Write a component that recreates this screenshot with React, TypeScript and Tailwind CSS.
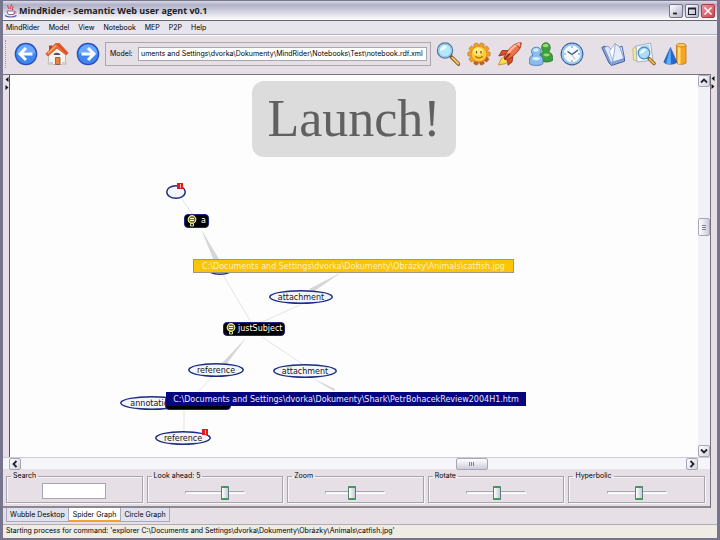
import { useState, type ReactNode } from "react";

const MENUS = ["MindRider", "Model", "View", "Notebook", "MEP", "P2P", "Help"];

function CupIcon() {
  return (
    <svg viewBox="0 0 12 14" className="h-3.5 w-3" aria-hidden="true">
      <path d="M6 0c2.500 1.500-3 3 0 5M8 2c1 1.200-2 2 0 4M3 1c-1 2 1 2.500.5 4" fill="none" stroke="#d8485a" strokeWidth="1.100" />
      <path d="M2 7h7.500l-.8 3.500H3.200z" fill="#fff" stroke="#7a6fae" />
      <path d="M9.500 7.500c2 0 1.700 2-.5 2.200" fill="none" stroke="#d8485a" />
      <path d="M0 11.500c2 2 9 2 11.500 0" fill="none" stroke="#5b57a4" strokeWidth="1.200" />
    </svg>
  );
}

function ArrowIcon({ forward = false }: { forward?: boolean }) {
  return (
    <svg viewBox="0 0 24 24" className="size-6" aria-hidden="true">
      <circle cx="12" cy="12" r="11.300" fill="#2850b8" />
      <circle cx="12" cy="12" r="10" fill="#3f86f4" />
      <path d="M2.500 12a9.500 9.500 0 0 1 19 0c-5-2-13-2-19 0z" fill="#6ca8ff" />
      <path
        d={forward ? "M5.500 12h12M12 6l6 6-6 6" : "M18.500 12h-12M12 6l-6 6 6 6"}
        fill="none"
        stroke="#fff"
        strokeWidth="3"
      />
    </svg>
  );
}

function HomeIcon() {
  return (
    <svg viewBox="0 0 24 24" className="size-6" aria-hidden="true">
      <path d="M4 3.500h3.500V9H4z" fill="#b8481c" />
      <path d="M3.500 12L12 5l8.500 7V22.500h-17z" fill="#f6f2f0" stroke="#b4aeb4" strokeWidth=".8" />
      <path d="M.8 12L10.500 1.500 14.500 1.500 23.200 11l-2.200 2L12 6 3 14z" fill="#f06c34" stroke="#c8481c" strokeWidth=".7" />
      <path d="M12.500 2L22 11.500" stroke="#d84c20" strokeWidth="1.600" />
      <path d="M3 11l8-7.500" fill="none" stroke="#ffa468" strokeWidth="1.600" />
      <path d="M8.500 13c.5-3 6-3 7 0z" fill="#545060" />
      <path d="M10.500 15.500H15v7h-4.500z" fill="#f08038" stroke="#8c5034" strokeWidth=".8" />
      <path d="M2.500 20h5.500v3H2.500zM17 20h5v3h-5z" fill="#d0ccc8" />
    </svg>
  );
}

function MagnifierIcon() {
  return (
    <svg viewBox="0 0 24 24" className="size-6" aria-hidden="true">
      <path d="M15.500 15l7 7" stroke="#7c5218" strokeWidth="3.800" strokeLinecap="round" />
      <path d="M16.300 15.600l6 6.200" stroke="#f8c468" strokeWidth="2" strokeLinecap="round" />
      <circle cx="9" cy="8.500" r="7.600" fill="#b4e8fc" stroke="#54749c" strokeWidth="1.300" />
      <circle cx="9" cy="8.500" r="6.200" fill="none" stroke="#8cc8ec" />
      <path d="M4 9c0-4 3-6 7-5-1 3-4 4-7 5z" fill="#f2fdff" />
    </svg>
  );
}

function SunIcon() {
  const rays = [18, 54, 90, 126, 162, 198, 234, 270, 306, 342];
  return (
    <svg viewBox="0 0 24 24" className="size-6" aria-hidden="true">
      {rays.map((angle) => (
        <rect key={angle} x="9.800" y=".8" width="4.400" height="6" rx="1.300" fill={angle > 100 && angle < 220 ? "#c8582c" : "#f4a024"} stroke="#b8702c" strokeWidth=".6" transform={`rotate(${angle} 12 12)`} />
      ))}
      <circle cx="12" cy="12" r="7.800" fill="#ffcc30" stroke="#e08c24" strokeWidth=".8" />
      <ellipse cx="11" cy="9.500" rx="5" ry="4" fill="#ffec80" />
      <path d="M9.500 9v2.500M14 9v2.500" stroke="#7c501c" strokeWidth="1.300" />
      <path d="M8.500 14c1 2.500 6 2.500 7 0" fill="none" stroke="#a8641c" strokeWidth="1.200" />
    </svg>
  );
}

function RocketIcon() {
  return (
    <svg viewBox="0 0 24 24" className="size-6" aria-hidden="true">
      <path d="M7 14l-4 3L.5 23 8 21.500l3-4.500z" fill="#ffdc50" stroke="#c88420" strokeWidth=".8" />
      <path d="M10 8.500H4L.8 14l7-1.500zM15 14.500L14 20l-4 3.200-.5-6z" fill="#d8502c" stroke="#8c2814" strokeWidth=".8" />
      <path d="M23.200.8c-6 0-9.500 3-15.200 10.500L6 16l2 2 5-2.500C19.500 10.500 23 7 23.200.8z" fill="#f07048" stroke="#a03418" strokeWidth=".9" />
      <path d="M22 2c-4 .5-8.500 4.500-12 9.500" fill="none" stroke="#ffb898" strokeWidth="2.400" />
      <path d="M18 2.500l3.500 3.500" stroke="#a03418" strokeWidth=".9" />
      <path d="M6.500 17.500l5.500-6" stroke="#7c2814" strokeWidth="1.600" />
    </svg>
  );
}

function PeopleIcon() {
  return (
    <svg viewBox="0 0 24 24" className="size-6" aria-hidden="true">
      <path d="M11.500 18.500c-1-4-.5-7.500 3-8.500-3-3-2.500-9 2.300-9.300 5 .3 5.600 6.300 2.700 9.300 3.500 1 4.500 4 4 8.500-3.500 2-9 2-12 0z" fill="#3ca03c" stroke="#28702c" strokeWidth=".8" />
      <path d="M13.500 4c.8-2.800 5-3 6.300-.5-1.500 2.300-4.300 2.500-6.300.5zM14 12.500c2-1.500 5-1.500 7 0-1.500 2.500-5.500 2.500-7 0z" fill="#98dc70" />
      <path d="M.8 22c-1-5 0-8 3.200-8.800C1.500 10.500 1.800 5.500 7 5.200s6.500 5 3.500 8c3.500 1 4 4 3.200 8.800-3.200 2-9.500 2-12.900 0z" fill="#8cbcec" stroke="#4474b4" strokeWidth=".8" />
      <path d="M3.800 8.500c.8-2.800 5-3 6.300-.5-1.500 2.300-4.300 2.500-6.300.5zM3 16.500c2-2 6-2 8.500 0-1.500 2.500-6.500 2.500-8.500 0z" fill="#d4ecff" />
    </svg>
  );
}

function ClockIcon() {
  return (
    <svg viewBox="0 0 24 24" className="size-6" aria-hidden="true">
      <circle cx="12" cy="12" r="10.800" fill="#f2faff" stroke="#40609c" strokeWidth="1.200" />
      <circle cx="12" cy="12" r="9.300" fill="none" stroke="#90c4f4" strokeWidth="1.700" />
      <path d="M12 4v2M12 18v2M4 12h2M18 12h2" stroke="#6c8cb0" />
      <path d="M7.500 9.500l4.500 3 6-4.500" fill="none" stroke="#345078" strokeWidth="1.300" />
      <path d="M12 12.500l3 5" stroke="#e0a85c" strokeWidth=".9" />
    </svg>
  );
}

function BookIcon() {
  return (
    <svg viewBox="0 0 24 24" className="size-6" aria-hidden="true">
      <path d="M.8 5.500L4 4l9 15 10.500-2.500v2.800L10.500 23.500 8 21z" fill="#88a4dc" stroke="#38589c" strokeWidth=".9" />
      <path d="M3 5.500L7 4l3.500 4 2 12-2.500 1z" fill="#dce8fa" stroke="#6c88c0" strokeWidth=".8" />
      <path d="M14 1.500L8.500 9.500 12 20l5-6z" fill="#fff" stroke="#a0b0d0" strokeWidth=".8" />
      <path d="M14 1.500L18.500 5 23 16.500 12 20c-1-4 2-8 2-18.500z" fill="#e4eefc" stroke="#7c94c4" strokeWidth=".8" />
      <path d="M18.500 5l2.500-.8L23.500 16.500" fill="none" stroke="#4468b0" />
    </svg>
  );
}

function DocumentSearchIcon() {
  return (
    <svg viewBox="0 0 24 24" className="size-6" aria-hidden="true">
      <path d="M.8 6.500L4 4l2 15-4.500-1z" fill="#f4e898" stroke="#b8a860" strokeWidth=".7" />
      <path d="M4 4L18.500 1l2.500 17-16 2z" fill="#f0f8fc" stroke="#8ca4b8" strokeWidth=".8" />
      <path d="M7 4.500l10-2 .8 5z" fill="#b8d8e8" />
      <path d="M17 16.500l5 5" stroke="#7c5218" strokeWidth="3.400" strokeLinecap="round" />
      <path d="M17.500 17l4.500 4.500" stroke="#f4b84c" strokeWidth="1.800" strokeLinecap="round" />
      <circle cx="12" cy="11" r="5.800" fill="#a8dcfa" stroke="#5088c0" strokeWidth="1.200" />
      <path d="M8 12c0-3 2-5 6-5-1 3-3 4-6 5z" fill="#effcff" />
    </svg>
  );
}

function ShapesIcon() {
  return (
    <svg viewBox="0 0 24 24" className="size-6" aria-hidden="true">
      <path d="M13.500 3v18c2 1.800 7.500 1.800 9.500 0V3z" fill="#f8a420" stroke="#c07414" strokeWidth=".8" />
      <path d="M15 4v18h2.500V4z" fill="#ffdc70" />
      <ellipse cx="18.200" cy="3.200" rx="4.700" ry="1.800" fill="#ffcc5c" stroke="#c07414" strokeWidth=".8" />
      <path d="M7.500 5.500L.8 20c1.500 3 11.500 3 13 0z" fill="#2468d4" stroke="#2050a8" strokeWidth=".6" />
      <path d="M7.500 5.500L3 21.500 8 22.300z" fill="#58b0fc" />
    </svg>
  );
}

function ToolButton({ label, children }: { label: string; children: ReactNode }) {
  return (
    <button type="button" aria-label={label} className="size-6 shrink-0">
      {children}
    </button>
  );
}

function WindowButton({ label, close = false, children }: { label: string; close?: boolean; children: ReactNode }) {
  return (
    <button
      type="button"
      aria-label={label}
      className={`flex size-3.5 items-center justify-center rounded-xs border ${
        close
          ? "border-[#a83c48] bg-linear-to-br from-[#e8949c] to-[#cc4450]"
          : "border-[#77778f] bg-linear-to-br from-white to-[#b4b4ca]"
      }`}
    >
      <svg viewBox="0 0 10 10" className="size-2.5" aria-hidden="true">
        {children}
      </svg>
    </button>
  );
}

function ScrollButton({ label, path }: { label: string; path: string }) {
  return (
    <button
      type="button"
      aria-label={label}
      className="flex size-3 shrink-0 items-center justify-center rounded-xs border border-[#a6a6b6] bg-linear-to-br from-white to-[#d4d4e0]"
    >
      <svg viewBox="0 0 8 8" className="size-2" aria-hidden="true">
        <path d={path} fill="none" stroke="#22222c" strokeWidth="1.800" />
      </svg>
    </button>
  );
}

function SplitArrows() {
  return (
    <svg viewBox="0 0 4 14" className="h-3.5 w-1" aria-hidden="true">
      <path d="M3.500 0v5L.5 2.500zM.5 8v5l3-2.500z" fill="#111" />
    </svg>
  );
}

function Bulb() {
  return (
    <svg viewBox="0 0 10 12" className="h-3 w-2.5 shrink-0" aria-hidden="true">
      <circle cx="5" cy="4.500" r="3.800" fill="#6c6a28" stroke="#f2ee84" strokeWidth="1.200" />
      <path d="M3 3.500h4M3 5.500h4" stroke="#fff" />
      <path d="M3.500 8.500h3V11h-3z" fill="#222" stroke="#f2ee84" strokeWidth=".9" />
    </svg>
  );
}

function Flag({ className }: { className: string }) {
  return (
    <span className={`absolute flex h-1.5 w-1.5 items-center justify-center bg-[#dc1c20] ${className}`}>
      <span className="h-1 w-px bg-[#ffb4b4]" />
    </span>
  );
}

function Predicate({ place, children }: { place: string; children?: ReactNode }) {
  return (
    <div className={`absolute flex h-3.5 items-center justify-center rounded-[50%] bg-[#f2f5fa] pt-px text-[#16161c] inset-ring-[1.5px] inset-ring-[#1c2c80] ${place}`}>
      {children}
    </div>
  );
}

function Concept({ place, children }: { place: string; children?: ReactNode }) {
  return (
    <div className={`absolute flex h-3.5 items-center gap-0.5 rounded-sm border border-[#1c2484] bg-black px-0.5 text-white ${place}`}>
      {children}
    </div>
  );
}

function Graph() {
  return (
    <div className="relative min-w-0 flex-1 overflow-hidden bg-[#fdfdfe] font-['DejaVu_Sans'] text-[8px] leading-[10px] whitespace-nowrap">
      <svg width="688" height="382" viewBox="10 75 688 382" className="absolute top-0 left-0" aria-hidden="true">
        <g stroke="#e4e4e8" fill="none">
          <path d="M182 199l11 16M222 273l29 49M302 304l-40 18M212 377l-17 18M262 337l42 28M184 409v22" />
        </g>
        <g fill="#d6d6d8">
          <path d="M201 229l13 32 5-2zM342 272l-33 17 4 3zM247 337l-26 27 4 2zM310 377l24 14 1-2z" />
        </g>
      </svg>

      <Predicate place="top-[110px] left-[156px] w-5" />
      <Flag className="top-[108px] left-[167px]" />
      <Concept place="top-[139px] left-[174px] w-[25px]">
        <Bulb />
        <span className="pl-0.5">a</span>
      </Concept>
      <Predicate place="top-[186px] left-[196px] w-7" />
      <Predicate place="top-[215px] left-[259px] w-16">attachment</Predicate>
      <Concept place="top-[247px] left-[213px] w-[62px]">
        <Bulb />
        justSubject
      </Concept>
      <Predicate place="top-[288px] left-[178px] w-14">reference</Predicate>
      <Predicate place="top-[289px] left-[263px] w-16">attachment</Predicate>
      <Predicate place="top-[321px] left-[110px] w-16">annotation</Predicate>
      <Concept place="top-[321px] left-[155px] w-[66px]" />
      <Predicate place="top-[356px] left-[145px] w-14">reference</Predicate>
      <Flag className="top-[354px] left-[192px]" />

      <div className="absolute top-[184px] left-[183px] flex h-3.5 w-[321px] items-center justify-center border border-[#a09484] bg-[#fcc404] pt-px text-[#fff4b8]">
        C:\Documents and Settings\dvorka\Dokumenty\Obrázky\Animals\catfish.jpg
      </div>
      <div className="absolute top-[317px] left-[156px] flex h-3.5 w-[360px] items-center justify-center bg-[#04047c] pt-px text-[#eaeaf6]">
        C:\Documents and Settings\dvorka\Dokumenty\Shark\PetrBohacekReview2004H1.htm
      </div>

      <div className="absolute top-1.5 left-1/2 flex h-[76px] w-[204px] -translate-x-1/2 items-center justify-center rounded-xl bg-[#dcdcdc] font-['Liberation_Serif'] text-[52px] leading-none text-[#606060]">
        Launch!
      </div>
    </div>
  );
}

function SliderGroup({ id, title, start }: { id: string; title: string; start: number }) {
  return (
    <fieldset className="flex h-8 min-w-0 justify-center border border-[#a8a4ac] shadow-[inset_1px_1px_0_#f8f6f8,1px_1px_0_#f8f6f8]">
      <legend className="ml-1 px-0.5">
        <label htmlFor={id}>{title}</label>
      </legend>
      <input
        id={id}
        type="range"
        min={0}
        max={100}
        defaultValue={start}
        className="mt-1 h-3.5 w-[60px] appearance-none bg-transparent [&::-webkit-slider-runnable-track]:h-[3px] [&::-webkit-slider-runnable-track]:border [&::-webkit-slider-runnable-track]:border-[#aaa8b0] [&::-webkit-slider-runnable-track]:border-r-white [&::-webkit-slider-runnable-track]:border-b-white [&::-webkit-slider-runnable-track]:bg-[#f4f2f4] [&::-webkit-slider-thumb]:-mt-1.5 [&::-webkit-slider-thumb]:h-3.5 [&::-webkit-slider-thumb]:w-2 [&::-webkit-slider-thumb]:appearance-none [&::-webkit-slider-thumb]:rounded-[1px] [&::-webkit-slider-thumb]:border [&::-webkit-slider-thumb]:border-y-2 [&::-webkit-slider-thumb]:border-[#5c7c78] [&::-webkit-slider-thumb]:border-y-[#3c9c58] [&::-webkit-slider-thumb]:bg-linear-to-r [&::-webkit-slider-thumb]:from-white [&::-webkit-slider-thumb]:to-[#c4ccd8]"
      />
    </fieldset>
  );
}

const TABS = ["Wubble Desktop", "Spider Graph", "Circle Graph"];

export default function App() {
  const [tab, setTab] = useState("Spider Graph");
  const [model, setModel] = useState("uments and Settings\\dvorka\\Dokumenty\\MindRider\\Notebooks\\Test\\notebook.rdf.xml");

  return (
    <div className="flex min-h-screen flex-col border-x-[3px] border-t border-b-2 border-[#77758e] bg-[#e6dfe5] font-[Inter,'DejaVu_Sans_Condensed',sans-serif] text-[7px] leading-[10px] text-black">
      <header className="flex h-5 items-center border-b border-[#66646e] bg-linear-to-b from-[#dcdce8] via-[#b0b0c8] via-20% to-white pr-0.5 pl-0.5">
        <CupIcon />
        <h1 className="flex-1 pl-0.5 font-['Open_Sans'] text-[9px] leading-3 font-bold whitespace-nowrap text-[#1c1c24]">
          MindRider - Semantic Web user agent v0.1
        </h1>
        <div className="flex gap-0.5">
          <WindowButton label="Minimize">
            <path d="M2 7.500h4" stroke="#22222c" strokeWidth="1.800" />
          </WindowButton>
          <WindowButton label="Maximize">
            <path d="M1.500 2h7v6.500h-7zM1.500 3h7" fill="none" stroke="#22222c" strokeWidth="1.100" />
          </WindowButton>
          <WindowButton label="Close" close>
            <path d="M1.500 1.500l7 7M8.500 1.500l-7 7" stroke="#fff" strokeWidth="1.500" />
          </WindowButton>
        </div>
      </header>

      <nav className="flex h-3.5 items-center gap-[9px] border-b border-[#b4b0b8] bg-[#e6e4ec] px-[3px]">
        {MENUS.map((menu) => (
          <button key={menu} type="button">
            {menu}
          </button>
        ))}
      </nav>

      <div className="flex h-[39px] items-center border-t border-white pb-[3px] pl-0.5">
        <div className="h-7 border-l border-dotted border-[#9c98a4]" />
        <div className="ml-2 flex gap-[7px]">
          <ToolButton label="Back"><ArrowIcon /></ToolButton>
          <ToolButton label="Home"><HomeIcon /></ToolButton>
          <ToolButton label="Forward"><ArrowIcon forward /></ToolButton>
        </div>
        <div className="ml-[5px] flex h-6 min-w-0 flex-1 items-center border border-[#aaa6ae] pr-[3px] pl-1">
          <label htmlFor="model" className="w-7">Model:</label>
          <input
            id="model"
            value={model}
            onChange={(event) => setModel(event.target.value)}
            className="h-3.5 min-w-0 flex-1 border border-[#aaa6ae] bg-white px-0.5"
          />
        </div>
        <div className="ml-[5px] flex gap-[7px]">
          <ToolButton label="Search"><MagnifierIcon /></ToolButton>
          <ToolButton label="New day"><SunIcon /></ToolButton>
          <ToolButton label="Launch"><RocketIcon /></ToolButton>
          <ToolButton label="People"><PeopleIcon /></ToolButton>
          <ToolButton label="History"><ClockIcon /></ToolButton>
        </div>
        <div className="mr-[30px] ml-[17px] flex gap-[7px]">
          <ToolButton label="Notebook"><BookIcon /></ToolButton>
          <ToolButton label="Find in document"><DocumentSearchIcon /></ToolButton>
          <ToolButton label="Shapes"><ShapesIcon /></ToolButton>
        </div>
      </div>

      <main className="flex flex-1">
        <div className="flex min-w-0 flex-1 flex-col">
          <div className="flex flex-1 border-t border-[#77737c]">
            <div className="flex w-[7px] justify-end border-r border-[#55515c] pt-0.5">
              <SplitArrows />
            </div>
            <Graph />
            <div className="flex w-3 flex-col items-center bg-[#f2f1f7]">
              <ScrollButton label="Scroll up" path="M1 5.500l3-3 3 3" />
              <div className="flex-[131]" />
              <div className="flex h-[18px] w-3 flex-col items-center justify-center gap-px rounded-xs border border-[#a6a6b6] bg-linear-to-r from-white to-[#ccccda]">
                <span className="h-px w-1 bg-[#7c8098]" />
                <span className="h-px w-1 bg-[#7c8098]" />
                <span className="h-px w-1 bg-[#7c8098]" />
              </div>
              <div className="flex-[209]" />
              <ScrollButton label="Scroll down" path="M1 2.500l3 3 3-3" />
            </div>
          </div>

          <div className="flex h-3 items-center border-t border-[#ccccd6] bg-[#f6f5fa] pl-1.5">
            <ScrollButton label="Scroll left" path="M5.500 1l-3 3 3 3" />
            <div className="flex-[434]" />
            <div className="flex h-3 w-8 items-center justify-center gap-px rounded-xs border border-[#a6a6b6] bg-linear-to-b from-white to-[#ccccda]">
              <span className="h-1 w-px bg-[#7c8098]" />
              <span className="h-1 w-px bg-[#7c8098]" />
              <span className="h-1 w-px bg-[#7c8098]" />
            </div>
            <div className="flex-[198]" />
            <ScrollButton label="Scroll right" path="M2.500 1l3 3-3 3" />
            <div className="w-3" />
          </div>

          <div className="grid grid-cols-5 gap-1 border-b-2 border-[#8c8890] pt-0.5 pr-[5px] pb-[3px] pl-[3px]">
            <fieldset className="flex h-8 min-w-0 justify-center border border-[#a8a4ac] shadow-[inset_1px_1px_0_#f8f6f8,1px_1px_0_#f8f6f8]">
              <legend className="ml-1 px-0.5">
                <label htmlFor="search">Search</label>
              </legend>
              <input id="search" className="mt-0.5 h-4 w-16 border border-[#a8a4b4] bg-white px-0.5" />
            </fieldset>
            <SliderGroup id="lookahead" title="Look ahead: 5" start={70} />
            <SliderGroup id="zoom" title="Zoom" start={44} />
            <SliderGroup id="rotate" title="Rotate" start={52} />
            <SliderGroup id="hyperbolic" title="Hyperbolic" start={54} />
          </div>
        </div>
        <div className="w-[7px] border-l border-[#77737c] pt-0.5">
          <SplitArrows />
        </div>
      </main>

      <div role="tablist" className="flex h-4 items-start pl-[3px]">
        {TABS.map((name) => (
          <button
            key={name}
            type="button"
            role="tab"
            aria-selected={tab === name}
            onClick={() => setTab(name)}
            className={
              tab === name
                ? "h-3.5 border-b-2 border-[#f0a430] bg-white px-1 pt-0.5 leading-[10px]"
                : "h-3.5 border-x border-b border-[#a8a8c0] bg-[#e2e2ee] px-[3px] leading-[10px]"
            }
          >
            {name}
          </button>
        ))}
      </div>
      <footer className="h-3.5 border-t border-[#b0acb0] bg-[#eeece4] px-[3px] pt-px whitespace-nowrap">
        Starting process for command: 'explorer C:\Documents and Settings\dvorka\Dokumenty\Obrázky\Animals\catfish.jpg'
      </footer>
    </div>
  );
}
